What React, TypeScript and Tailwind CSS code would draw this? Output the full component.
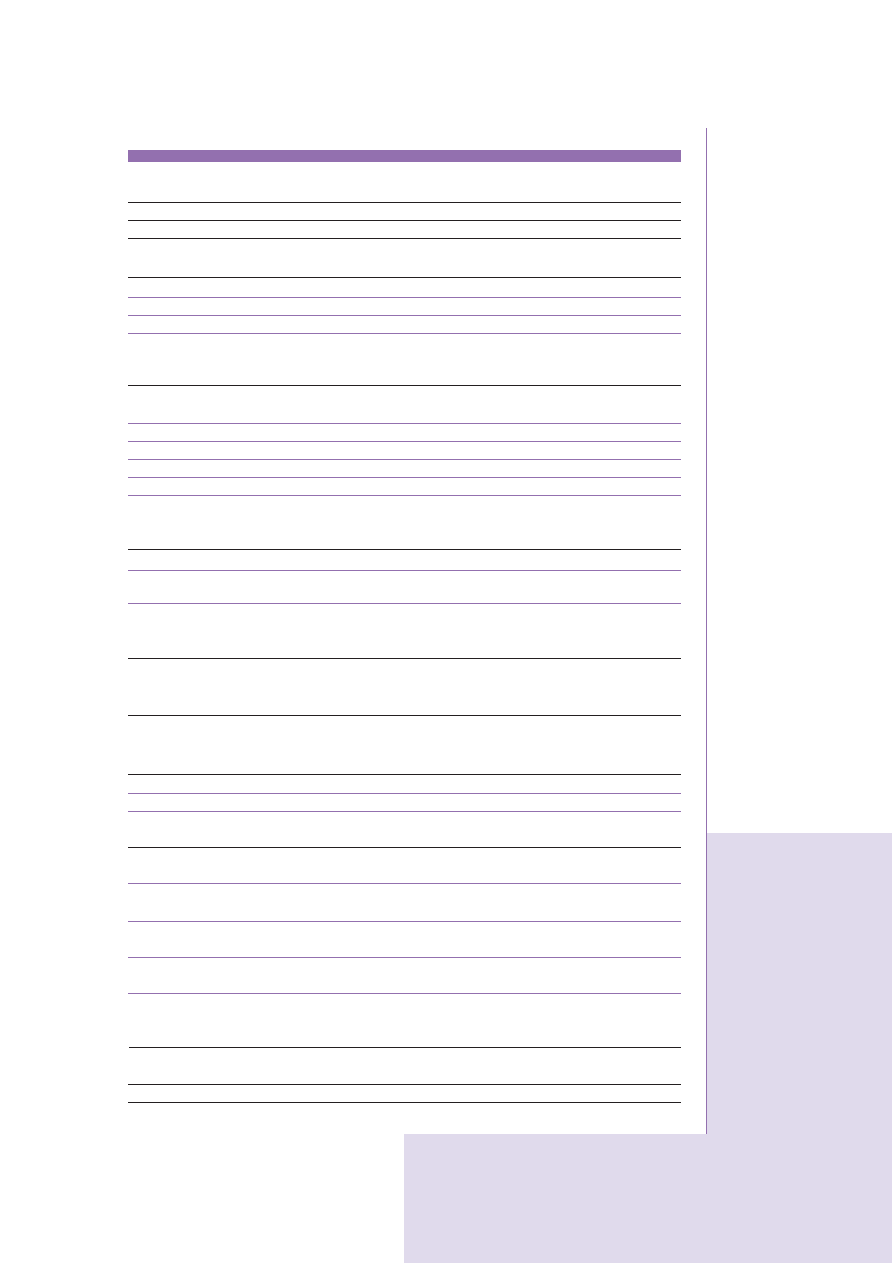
const BLACK = "border-[#231f20]";
const PURPLE = "border-[#9370af]";

// each row ends in a rule; height includes the 1px border
const rows = [
  { h: "h-[41px]", c: BLACK },
  { h: "h-[18px]", c: BLACK },
  { h: "h-[18px]", c: BLACK },
  { h: "h-[39px]", c: BLACK },
  { h: "h-[20px]", c: PURPLE },
  { h: "h-[18px]", c: PURPLE },
  { h: "h-[18px]", c: PURPLE },
  { h: "h-[52px]", c: BLACK },
  { h: "h-[38px]", c: PURPLE },
  { h: "h-[18px]", c: PURPLE },
  { h: "h-[18px]", c: PURPLE },
  { h: "h-[18px]", c: PURPLE },
  { h: "h-[18px]", c: PURPLE },
  { h: "h-[54px]", c: BLACK },
  { h: "h-[21px]", c: PURPLE },
  { h: "h-[33px]", c: PURPLE },
  { h: "h-[55px]", c: BLACK },
  { h: "h-[57px]", c: BLACK },
  { h: "h-[59px]", c: BLACK },
  { h: "h-[19px]", c: PURPLE },
  { h: "h-[18px]", c: PURPLE },
  { h: "h-[36px]", c: BLACK },
  { h: "h-[36px]", c: PURPLE },
  { h: "h-[38px]", c: PURPLE },
  { h: "h-[36px]", c: PURPLE },
  { h: "h-[36px]", c: PURPLE },
  { h: "h-[54px]", c: BLACK, indent: true },
  { h: "h-[37px]", c: BLACK },
  { h: "h-[18px]", c: BLACK },
];

function TableRules() {
  return (
    <div className="flex flex-col">
      <div className="mt-[22px] h-[12px] bg-[#9370af]" />
      {rows.map((r, i) => (
        <div
          key={i}
          className={`${r.h} border-b ${r.c} ${r.indent ? "ml-px" : ""}`}
        />
      ))}
    </div>
  );
}

export default function App() {
  return (
    <div className="w-[893px] h-[1263px] bg-white overflow-hidden font-['Liberation_Sans',sans-serif]">
      <div className="h-[128px]" />
      <div className="flex h-[1006px]">
        <div className="w-[706px] pl-[128px] pr-[25px]">
          <TableRules />
        </div>
        <div className="w-px bg-[#9370af]" />
        <div className="flex-1 mr-px flex flex-col">
          <div className="h-[705px]" />
          <div className="flex-1 bg-[#e0daec]" />
        </div>
      </div>
      <div className="flex h-[129px]">
        <div className="w-[404px]" />
        <div className="flex-1 mr-px bg-[#e0daec]" />
      </div>
    </div>
  );
}
